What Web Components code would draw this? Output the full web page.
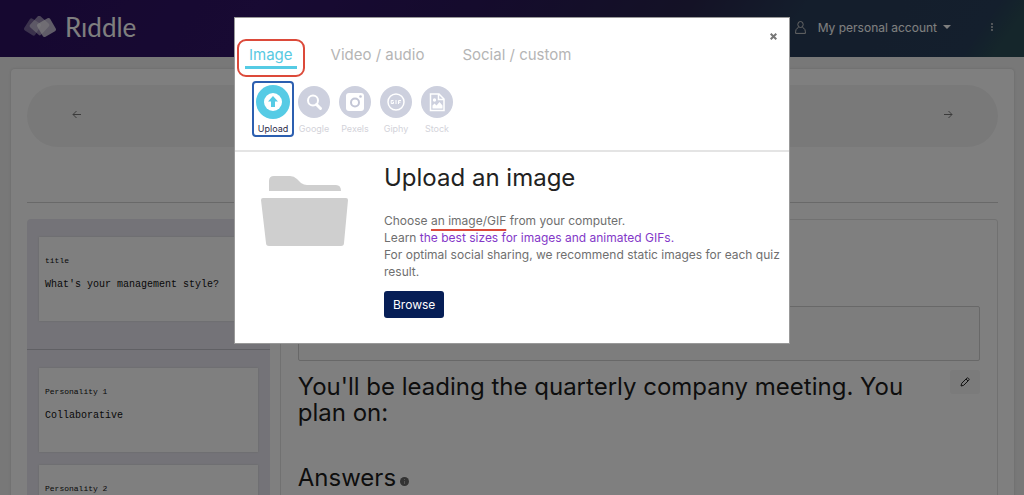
<!DOCTYPE html>
<html lang="en">
<head>
<meta charset="utf-8">
<meta name="viewport" content="width=device-width, initial-scale=1">
<title>Riddle – Upload an image</title>
<style>
  body { margin: 0; background: #f1f1f1; color: #1c1c1c; font: 12px/17px Inter, "Open Sans", sans-serif; }
  /* the page behind an open modal does not scroll */
  html, body { overflow: hidden; height: 100%; }
</style>
</head>
<body>
<app-header></app-header>
<app-page>
  <step-bar></step-bar>
  <side-panel slot="side">
    <info-card slot="title" label="title">What's your management style?</info-card>
    <info-card label="Personality 1">Collaborative</info-card>
    <info-card label="Personality 2"></info-card>
  </side-panel>
  <question-panel slot="main">You'll be leading the quarterly company meeting. You plan on:</question-panel>
</app-page>
<media-modal>
  <media-tab slot="tabs" active>Image</media-tab>
  <media-tab slot="tabs">Video / audio</media-tab>
  <media-tab slot="tabs">Social / custom</media-tab>
  <media-source slot="sources" icon="upload" active>Upload</media-source>
  <media-source slot="sources" icon="google">Google</media-source>
  <media-source slot="sources" icon="pexels">Pexels</media-source>
  <media-source slot="sources" icon="giphy">Giphy</media-source>
  <media-source slot="sources" icon="stock">Stock</media-source>
  <upload-pane></upload-pane>
</media-modal>

<script>
const define = (name, html) => customElements.define(name, class extends HTMLElement {
  constructor() {
    super();
    this.attachShadow({ mode: "open" }).innerHTML =
      "<style>*{box-sizing:border-box}button{font:inherit;color:inherit;background:none;border:0;padding:0;cursor:pointer}svg{display:block}</style>" +
      (typeof html === "function" ? html(this) : html);
  }
});

define("app-header", `
<style>
  :host { display: flex; align-items: center; height: 57px; padding: 0 29px 3px 23px; box-sizing: border-box; color: #fff;
    background: linear-gradient(125deg, #2c1060 0%, #301466 25%, #2a165a 45%, #28244c 65%, #283c58 76%, #283e5a 94%, #2a4c56 97%, #2a4c56 100%); }
  .logo { display: flex; align-items: center; gap: 8px; color: #fff; text-decoration: none; font: 26px/32px Lato, sans-serif; }
  .account { display: flex; align-items: center; gap: 12px; margin-left: auto; margin-right: 38px; }
  .account span { display: flex; align-items: center; gap: 6px; }
</style>
<a class="logo" href="#">
  <svg width="34" height="22" viewBox="0 0 34 22" aria-hidden="true">
    <g fill="#fff">
      <rect x="3" y="4" width="13" height="14" rx="2" opacity=".35" transform="rotate(33 9.500 11)"/>
      <rect x="9" y="2" width="15" height="15" rx="2" opacity=".5" transform="rotate(42 16.500 9.500)"/>
      <rect x="16" y="4" width="15" height="15" rx="2" opacity=".7" transform="rotate(-30 23.500 11.500)"/>
    </g>
  </svg>
  <span>Rıddle</span>
</a>
<button class="account">
  <svg width="11" height="13" viewBox="0 0 11 13" fill="none" stroke="#ccc" aria-hidden="true"><ellipse cx="5.500" cy="3.500" rx="2.700" ry="3"/><path d="M3.500 6.500C1 7.500.6 9 .6 12.400h9.800C10.400 9 10 7.500 7.500 6.500"/></svg>
  <span>My personal account
    <svg width="8" height="4" viewBox="0 0 8 4" fill="#fff" aria-hidden="true"><path d="M0 0h8L4 4z"/></svg>
  </span>
</button>
<button aria-label="More">
  <svg width="6" height="8" viewBox="0 0 6 8" fill="#ddd"><circle cx="3" cy="1" r=".9"/><circle cx="3" cy="4" r=".9"/><circle cx="3" cy="7" r=".9"/></svg>
</button>`);

define("app-page", `
<style>
  :host { display: block; margin: 12px 10px 0 11px; padding: 16px; background: #fff; border-radius: 4px; box-shadow: 0 0 3px #ccc; }
  hr { margin: 55px 0 16px; border: 0; border-top: 1px solid #d2d2d2; }
  .cols { display: grid; grid-template-columns: 25% 1fr; gap: 10px; }
</style>
<slot></slot>
<hr>
<div class="cols"><slot name="side"></slot><slot name="main"></slot></div>`);

define("step-bar", `
<style>
  :host { display: flex; justify-content: space-between; align-items: center; height: 62px; padding: 0 45px 4px; box-sizing: border-box; border-radius: 31px; background: #f3f3f3; color: #777; }
</style>
<button aria-label="Previous"><svg width="9" height="9" viewBox="0 0 9 9" fill="none" stroke="currentColor"><path d="M9 4.500H1M4.500 1L1 4.500 4.500 8"/></svg></button>
<button aria-label="Next"><svg width="9" height="9" viewBox="0 0 9 9" fill="none" stroke="currentColor"><path d="M0 4.500h8M4.500 1L8 4.500 4.500 8"/></svg></button>`);

define("side-panel", `
<style>
  :host { display: block; background: #e8e7f0; border-radius: 4px; }
  section { display: grid; gap: 13px; padding: 18px 12px; }
  .title { padding-bottom: 28px; border-bottom: 1px solid #c0c0c8; }
</style>
<section class="title"><slot name="title"></slot></section>
<section><slot></slot></section>`);

define("info-card", el => `
<style>
  :host { display: block; min-height: 84px; padding: 16px 6px; box-sizing: border-box; background: #fff; box-shadow: 0 0 2px #ccc; font-family: "Liberation Mono", monospace; color: #111; }
  .label { margin: 0 0 8px; font-size: 8px; line-height: 16px; }
  .value { margin: 0; font-size: 10px; line-height: 16px; }
</style>
<p class="label">${el.getAttribute("label")}</p>
<p class="value"><slot></slot></p>`);

define("question-panel", `
<style>
  :host { display: block; padding: 86px 17px 0; border: 1px solid #e2e2e2; border-radius: 3px; }
  .media { height: 55px; border: 1px solid #d0d0d0; border-radius: 2px; background: #fafafa; }
  .row { display: flex; align-items: flex-start; gap: 20px; margin: 9px 0 39px; }
  h2 { flex: 1; margin: 0; padding-top: 4px; font-size: 24px; line-height: 26px; font-weight: 400; }
  h2.answers { display: flex; align-items: center; gap: 4px; padding: 0; }
  .answers svg { margin-top: 6px; }
  .edit { display: grid; place-items: center; width: 30px; height: 24px; border-radius: 3px; background: #f6f6f6; }
</style>
<div class="media"></div>
<div class="row">
  <h2><slot></slot></h2>
  <button class="edit" aria-label="Edit question"><svg width="10" height="10" viewBox="0 0 10 10" fill="none" stroke="#222"><path d="M1 9l.7-2.700L6.800 1.200q.8-.7 1.500 0l.5.500q.7.700 0 1.500L3.700 8.300zM6 2l2 2"/></svg></button>
</div>
<h2 class="answers">Answers
  <svg width="9" height="9" viewBox="0 0 9 9" aria-hidden="true"><circle cx="4.500" cy="4.500" r="4.500" fill="#666"/><path d="M4.500 4v3M4.500 2v1" stroke="#aaa"/></svg>
</h2>`);

define("media-modal", `
<style>
  :host { position: fixed; inset: 0; display: flex; justify-content: center; align-items: flex-start; padding: 17px 16px; background: rgba(0,0,0,.5); }
  [role=dialog] { position: relative; width: 100%; max-width: 556px; background: #fff; border: 1px solid #999; box-sizing: border-box; }
  .close { position: absolute; top: 15px; right: 12px; }
  nav { display: flex; gap: 30px; padding: 25px 10px 0; }
  .sources { display: flex; padding: 12px 17px 13px; border-bottom: 2px solid #e4e4e4; }
</style>
<div role="dialog" aria-label="Add media">
  <button class="close" aria-label="Close"><svg width="7" height="7" viewBox="0 0 7 7" stroke="#777" stroke-width="2"><path d="M.7.700l5.600 5.600M6.300.700L.7 6.300"/></svg></button>
  <nav><slot name="tabs"></slot></nav>
  <div class="sources"><slot name="sources"></slot></div>
  <slot></slot>
</div>`);

define("media-tab", `
<style>
  :host { position: relative; display: block; color: #b5b5b5; font-size: 15px; line-height: 23px; }
  button { padding: 0 4px; border-bottom: 3px solid transparent; }
  :host([active]) { color: #58c9e2; }
  :host([active]) button { border-color: #55cbe4; }
  /* marker ring drawn round the current tab */
  :host([active])::after { content: ""; position: absolute; inset: -4px -8px -8px; border: 2px solid #dc4a3a; border-radius: 9px; pointer-events: none; }
</style>
<button><slot></slot></button>`);

const icons = {
  upload: `<circle cx="17" cy="17" r="17" fill="#56cbe5"/><circle cx="17" cy="17" r="9" fill="#fff"/><path d="M17 11l5 5.500h-3V22h-4v-5.500h-3z" fill="#56cbe5"/>`,
  google: `<circle cx="17" cy="17" r="16" fill="#cdd0de"/><g fill="none" stroke="#fff"><circle cx="16" cy="15.500" r="5" stroke-width="2"/><path d="M19.500 19.500l4 4" stroke-width="3" stroke-linecap="round"/></g>`,
  pexels: `<circle cx="17" cy="17" r="16" fill="#cdd0de"/><rect x="8" y="8" width="18" height="18" rx="3" fill="#fff"/><circle cx="17" cy="17.500" r="4" fill="none" stroke="#c3c6d6" stroke-width="2"/><circle cx="22.500" cy="11.500" r="1.300" fill="#c3c6d6"/>`,
  giphy: `<circle cx="17" cy="17" r="16" fill="#cdd0de"/><circle cx="17" cy="17" r="8" fill="none" stroke="#fff" stroke-width="1.500"/><path d="M14.500 15.500h-2.300v3h2.300V17h-1M17 15v4M19.500 19v-3.500h2.500M19.500 17.200h2" fill="none" stroke="#fff"/>`,
  stock: `<circle cx="17" cy="17" r="16" fill="#cdd0de"/><path d="M10.500 9h8.500l5 5v11.500H10.500zM18.500 9v5.500h5.500" fill="none" stroke="#fff" stroke-width="1.500"/><path d="M12.500 23.500v-3l2-2 2 2 3-3.500 3 3.500v3z" fill="#fff"/><circle cx="14.500" cy="15" r="1.700" fill="#fff"/>`
};
define("media-source", el => `
<style>
  :host { display: block; width: 41px; color: #d3d3da; font-size: 9px; line-height: 12px; }
  button { display: grid; justify-items: center; gap: 3px; width: 42px; height: 56px; padding: 2px 0 0; border: 2px solid transparent; border-radius: 4px; }
  :host([active]) { color: #2b2b4a; }
  :host([active]) button { border-color: #2c5fb0; }
</style>
<button><svg width="34" height="34" viewBox="0 0 34 34" aria-hidden="true">${icons[el.getAttribute("icon")]}</svg><slot></slot></button>`);

define("upload-pane", `
<style>
  :host { display: grid; grid-template-columns: 87px 1fr; gap: 36px; padding: 11px 6px 25px 26px; }
  .folder { margin-top: 13px; }
  h1 { margin: 0 0 19px; font-size: 24px; line-height: 30px; font-weight: 400; color: #222; }
  p { margin: 0; color: #6f6f6f; }
  u { text-decoration: underline 2px #dc4a3a; text-underline-offset: 4px; text-decoration-skip-ink: none; }
  a { color: #8338c8; text-decoration: none; }
  .browse { margin-top: 11px; padding: 5px 9px; border-radius: 3px; background: #061e56; color: #fff; }
</style>
<svg class="folder" width="87" height="70" viewBox="0 0 87 70" fill="#cfcfcf" aria-hidden="true">
  <path d="M8 15V5q0-5 5-5h16q4 0 7 3l4 4q3 2 6 2h29q5 0 5 6z"/>
  <path d="M2 22h83q2 0 2 2l-4 43q0 3-3 3H8q-3 0-3-3L0 24q0-2 2-2z"/>
</svg>
<div>
  <h1>Upload an image</h1>
  <p>Choose <u>an image/GIF</u> from your computer.<br>
  Learn <a href="#">the best sizes for images and animated GIFs.</a><br>
  For optimal social sharing, we recommend static images for each quiz result.</p>
  <button class="browse">Browse</button>
</div>`);
</script>
</body>
</html>
